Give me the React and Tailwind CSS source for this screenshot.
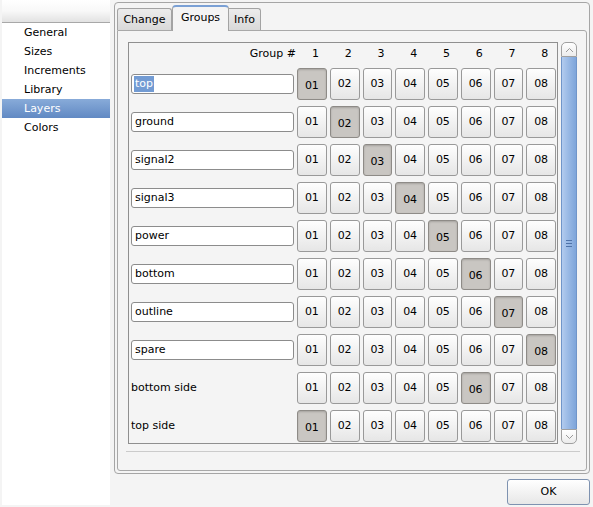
import React from "react";

const navItems = ["General", "Sizes", "Increments", "Library", "Layers", "Colors"];
const layers = ["top", "ground", "signal2", "signal3", "power", "bottom", "outline", "spare"];
const nums = ["01", "02", "03", "04", "05", "06", "07", "08"];

const GroupBtn = ({ label, on }) =>
  on ? (
    <div className="h-full rounded-[3px] border border-[#8e8b87] bg-[#c9c6c2] shadow-[inset_0_1px_2px_rgba(0,0,0,0.18)] flex items-center justify-center pt-[4px]">
      {label}
    </div>
  ) : (
    <div className="h-full rounded-[3px] border border-[#999999] bg-linear-to-b from-[#fefefe] to-[#e6e6e6] flex items-center justify-center">
      {label}
    </div>
  );

const Row = ({ children, active }) => (
  <div className="h-[32px] flex items-center">
    <div className="w-[163px] h-[20px] flex items-center">{children}</div>
    <div className="ml-[3px] w-[259px] h-full grid grid-cols-8 gap-[3px]">
      {nums.map((n, i) => (
        <GroupBtn key={n} label={n} on={i === active} />
      ))}
    </div>
  </div>
);

const Chevron = ({ up }) => (
  <svg width="9" height="6" viewBox="0 0 9 6">
    <path
      d={up ? "M1 5 L4.5 1.5 L8 5" : "M1 1 L4.5 4.5 L8 1"}
      fill="none"
      stroke="#9a9a9a"
      strokeWidth="1"
    />
  </svg>
);

const App = () => {
  return (
    <div className="w-[593px] h-[507px] bg-[#f4f4f4] flex font-['DejaVu_Sans',sans-serif] text-[11px] text-black overflow-hidden">
      {/* side list */}
      <div className="ml-[2px] w-[108px] h-[505px] bg-white flex flex-col">
        <div className="h-[23px] border-b border-[#a8a8a8] bg-linear-to-b from-white via-[#f8f8f8] to-[#e2e2e2]" />
        {navItems.map((item) => (
          <div
            key={item}
            className={
              item === "Layers"
                ? "h-[19px] flex items-center pl-[22px] pt-px text-white bg-linear-to-b from-[#88abd9] to-[#6189c3]"
                : "h-[19px] flex items-center pl-[22px] pt-px"
            }
          >
            {item}
          </div>
        ))}
      </div>

      <div className="ml-[4px] flex flex-col">
        {/* tab frame */}
        <div className="mt-[2px] w-[476px] h-[472px] border border-[#a5a5a5] rounded-[4px] p-[2px] flex flex-col">
          <div className="h-[25px] flex items-end">
            <div className="w-[55px] h-[22px] border border-b-0 border-[#a3a3a3] rounded-t-[3px] bg-linear-to-b from-[#ececec] to-[#d9d9d9] flex items-center justify-center pt-[2px]">
              Change
            </div>
            <div className="relative z-10 -mb-px w-[57px] h-[26px] border border-b-0 border-[#a3a3a3] border-t-2 border-t-[#7aa0d5] rounded-t-[4px] bg-[#f4f4f4] flex items-center justify-center pb-[2px]">
              Groups
            </div>
            <div className="w-[32px] h-[22px] border border-b-0 border-l-0 border-[#a3a3a3] rounded-tr-[3px] bg-linear-to-b from-[#ececec] to-[#d9d9d9] flex items-center justify-center pt-[2px]">
              Info
            </div>
          </div>

          <div className="h-[441px] border border-[#a8a8a8] rounded-b-[3px] rounded-tr-[3px] flex flex-col">
            <div className="ml-[10px] mt-[11px] w-[449px] h-[402px] flex">
              {/* viewport */}
              <div className="w-[430px] h-full border border-[#8f8f8f] overflow-hidden flex flex-col pl-[2px]">
                <div className="h-[21px] flex items-center pt-px">
                  <div className="w-[165px] text-right">Group #</div>
                  <div className="ml-[1px] w-[259px] grid grid-cols-8 gap-[3px]">
                    {nums.map((n, i) => (
                      <div key={n} className="text-center pl-[7px]">
                        {i + 1}
                      </div>
                    ))}
                  </div>
                </div>
                <div className="pt-[4px] flex flex-col gap-[6px]">
                  {layers.map((name, i) => (
                    <Row key={name} active={i}>
                      <div className="w-full h-full border border-[#8c8c8c] rounded-[3px] bg-white flex items-center pl-[2px]">
                        <span className={i === 0 ? "px-[1px] bg-[#729bd3] text-white leading-[16px]" : "px-[1px] leading-[16px]"}>
                          {name}
                        </span>
                      </div>
                    </Row>
                  ))}
                  <Row active={5}>
                    <span>bottom side</span>
                  </Row>
                  <Row active={0}>
                    <span>top side</span>
                  </Row>
                </div>
              </div>
              {/* scrollbar */}
              <div className="ml-[3px] w-[16px] h-full flex flex-col">
                <div className="h-[15px] border border-[#a0a0a0] rounded-t-[5px] bg-linear-to-b from-white to-[#ececec] flex items-center justify-center">
                  <Chevron up />
                </div>
                <div className="flex-1 border-x border-[#7095c9] bg-linear-to-r from-[#b2cbee] via-[#96b7e4] to-[#7ea5da] flex items-center justify-center">
                  <svg width="6" height="7" viewBox="0 0 6 7">
                    <path d="M0 0.5 H6 M0 3.5 H6 M0 6.5 H6" stroke="#4f73a8" strokeWidth="1" />
                  </svg>
                </div>
                <div className="h-[15px] border border-[#a0a0a0] rounded-b-[5px] bg-linear-to-b from-white to-[#ececec] flex items-center justify-center">
                  <Chevron />
                </div>
              </div>
            </div>
            <div className="ml-[8px] mt-[7px] w-[454px] h-px bg-[#cbcbcb]" />
          </div>
        </div>

        <div className="mt-[5px] flex justify-end">
          <button className="w-[83px] h-[26px] border border-[#7e92b0] rounded-[3px] bg-linear-to-b from-white to-[#e7e7e7] flex items-center justify-center">
            OK
          </button>
        </div>
      </div>
    </div>
  );
};

export default App;
